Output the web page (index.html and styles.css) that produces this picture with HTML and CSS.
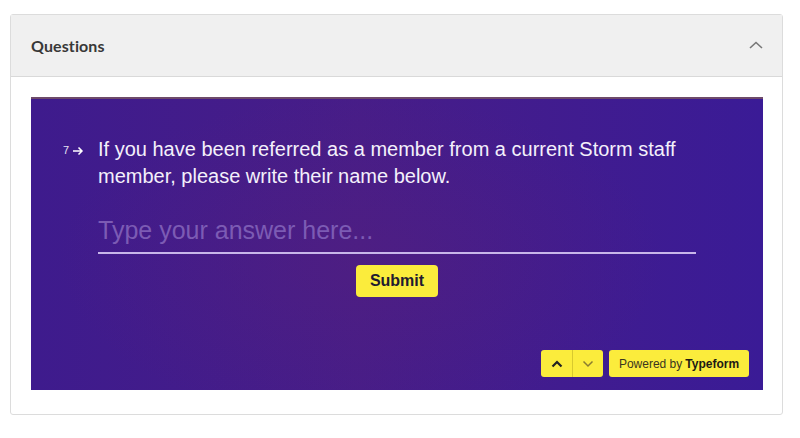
FILE: index.html
```html
<!DOCTYPE html>
<html>
<head>
<meta charset="utf-8">
<link rel="stylesheet" href="styles.css">
</head>
<body>
<section class="card">
  <header class="card-head">
    <h2 class="card-title">Questions</h2>
    <svg class="chev" width="14" height="8" viewBox="0 0 14 8"><path d="M1 7 L7 1.5 L13 7" fill="none" stroke="#777" stroke-width="1.6"/></svg>
  </header>
  <div class="card-body">
    <div class="tf">
      <div class="q">
        <div class="qnum">7<svg width="12" height="10" viewBox="0 0 12 10"><path d="M1 5 H10 M6.5 1.5 L10 5 L6.5 8.5" fill="none" stroke="#fff" stroke-width="1.5"/></svg></div>
        <div class="qmain">
          <p class="qtext">If you have been referred as a member from a current Storm staff member, please write their name below.</p>
          <div class="answer">Type your answer here...</div>
        </div>
      </div>
      <div class="submit-row"><button class="submit">Submit</button></div>
      <div class="foot">
        <div class="nav">
          <button class="navbtn"><svg width="12" height="8" viewBox="0 0 12 8"><path d="M1.5 6.5 L6 2 L10.5 6.5" fill="none" stroke="#222" stroke-width="2.2"/></svg></button>
          <button class="navbtn dim"><svg width="12" height="8" viewBox="0 0 12 8"><path d="M1.5 1.5 L6 6 L10.5 1.5" fill="none" stroke="#8a7d30" stroke-width="1.5"/></svg></button>
        </div>
        <div class="powered">Powered by <b>Typeform</b></div>
      </div>
    </div>
  </div>
</section>
</body>
</html>
```
FILE: styles.css
```css
* { box-sizing: border-box; }
html, body { margin: 0; background: #fff; }
body { padding: 14px 17px 0 10px; font-family: "Liberation Sans", Arial, sans-serif; }
.card {
  width: 773px;
  border: 1px solid #dcdcdc;
  border-radius: 3px;
  background: #fff;
}
.card-head {
  height: 62px;
  background: #f0f0f0;
  border-bottom: 1px solid #d9d9d9;
  display: flex;
  align-items: center;
  justify-content: space-between;
  padding: 0 19px 0 20px;
}
.card-title {
  margin: 0;
  font-family: Lato, "Open Sans", sans-serif;
  font-size: 16px;
  font-weight: 700;
  color: #383838;
  letter-spacing: 0.1px;
}
.chev { margin-top: -2px; }
.card-body { padding: 20px 19px 24px 20px; }
.tf {
  height: 293px;
  border-top: 2px solid #6e4a6a;
  background:
    radial-gradient(ellipse 55% 75% at 45% 55%, rgba(90, 32, 120, 0.35), rgba(90, 32, 120, 0) 75%),
    linear-gradient(90deg, #3e1b8d 0%, #471d88 45%, #3a1b96 100%);
  display: flex;
  flex-direction: column;
  padding: 0 14px 13px 32px;
  color: #fff;
}
.q { display: flex; margin-top: 37px; }
.qnum {
  width: 35px;
  font-size: 11px;
  line-height: 27px;
  color: #e8e2f4;
  display: flex;
  align-items: center;
  gap: 3px;
  height: 27px;
  padding-top: 1px;
}
.qnum svg { margin-top: 1px; }
.qmain { width: 598px; }
.qtext {
  margin: 0;
  font-size: 20px;
  line-height: 27px;
  color: #f4f0fb;
}
.answer {
  margin-top: 24px;
  font-size: 25px;
  line-height: 32px;
  color: #7c5bb4;
  padding-bottom: 6px;
  border-bottom: 2px solid #c8b6ea;
}
.submit-row { display: flex; justify-content: center; margin-top: 11px; padding-right: 18px; }
.submit {
  width: 82px;
  height: 32px;
  border: none;
  border-radius: 4px;
  background: #fbec3c;
  font-family: "Liberation Sans", Arial, sans-serif;
  font-weight: 700;
  font-size: 16px;
  color: #221a30;
  padding: 0;
}
.foot {
  margin-top: auto;
  display: flex;
  justify-content: flex-end;
  gap: 6px;
}
.nav { display: flex; }
.navbtn {
  width: 31px;
  height: 27px;
  border: none;
  background: #fbec3c;
  padding: 0;
  display: flex;
  align-items: center;
  justify-content: center;
  border-radius: 3px 0 0 3px;
}
.navbtn.dim { border-left: 1px solid #d8c92e; border-radius: 0 3px 3px 0; }
.powered {
  width: 140px;
  height: 27px;
  background: #fbec3c;
  border-radius: 3px;
  display: flex;
  align-items: center;
  justify-content: center;
  font-size: 12px;
  color: #3a3520;
}
.powered b { color: #1e1a14; margin-left: 3px; }
```
